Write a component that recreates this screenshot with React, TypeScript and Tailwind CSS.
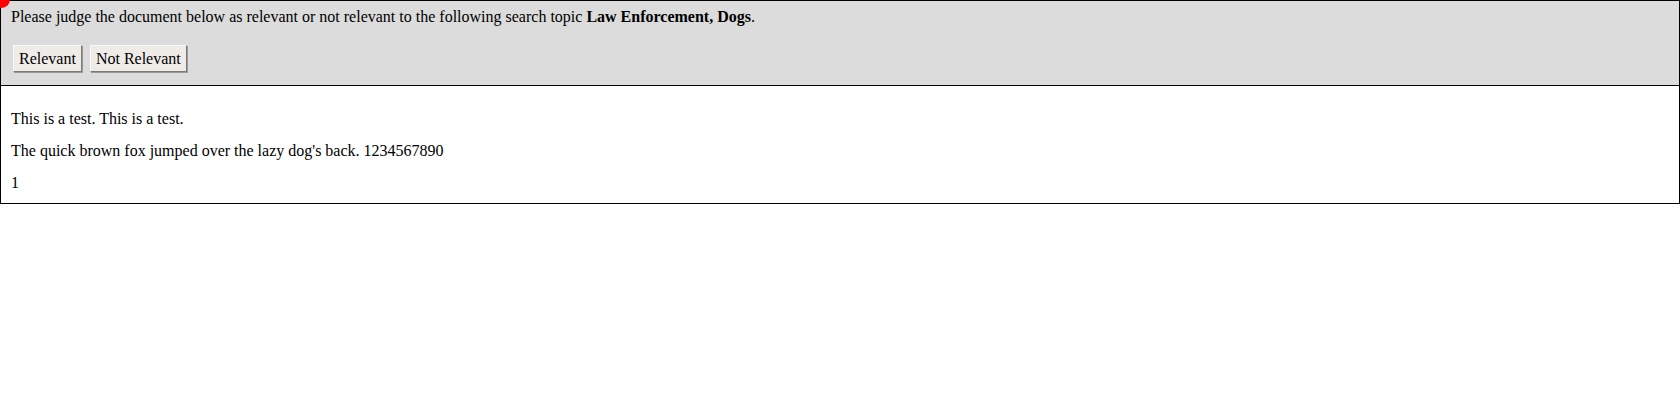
import React from 'react';

const JudgeButton: React.FC<{ label: string }> = ({ label }) => (
  <button
    type="button"
    className="h-[27px] px-[5px] flex items-center bg-[#efece8] border border-t-[#f8f8f8] border-l-[#f8f8f8] border-r-[#7a7a7a] border-b-[#7a7a7a] shadow-[1px_1px_0_#9a9a9a] text-black text-[16px] leading-[18px]"
  >
    {label}
  </button>
);

export default function App() {
  return (
    <div className="relative w-full bg-white text-black font-['Liberation_Serif','Times_New_Roman',serif] text-[16px] leading-[18px]">
      {/* marker dot in the corner */}
      <div className="absolute -left-[7px] -top-[9px] w-[17px] h-[17px] rounded-full bg-[#ff0000] z-10" />

      <div className="border border-black">
        {/* Question bar */}
        <div className="bg-[#dcdcdc] border-b border-black px-[10px] pt-[7px] pb-[13px]">
          <div>
            Please judge the document below as relevant or not relevant to the following search topic{' '}
            <b>Law Enforcement, Dogs</b>.
          </div>
          <div className="mt-[19px] flex gap-[8px] pl-[2px]">
            <JudgeButton label="Relevant" />
            <JudgeButton label="Not Relevant" />
          </div>
        </div>

        {/* Document */}
        <div className="px-[10px] pt-[24px] pb-[11px] flex flex-col gap-[14px]">
          <p>This is a test. This is a test.</p>
          <p>The quick brown fox jumped over the lazy dog's back. 1234567890</p>
          <p>1</p>
        </div>
      </div>
    </div>
  );
}
